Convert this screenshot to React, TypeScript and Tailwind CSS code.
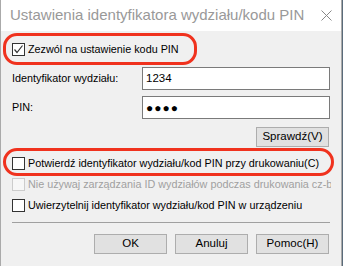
import React from "react";

const font = { fontFamily: '"Segoe UI", "Liberation Sans", Arial, sans-serif' };

const Box = ({ checked = false, disabled = false }: { checked?: boolean; disabled?: boolean }) => (
  <span
    className={
      "flex h-[13px] w-[13px] flex-none items-center justify-center border " +
      (disabled ? "border-[#cccccc] bg-[#f7f7f7]" : "border-[#333333] bg-white")
    }
  >
    {checked && (
      <svg width="11" height="11" viewBox="0 0 11 11">
        <path d="M1.5 5.5 L4 8.5 L9.5 1.5" fill="none" stroke="#333" strokeWidth="1.2" />
      </svg>
    )}
  </span>
);

const Btn = ({ label }: { label: string }) => (
  <button className="flex h-[20px] w-[73px] items-center justify-center border border-[#adadad] bg-[#e1e1e1] text-[11.5px] text-black">
    {label}
  </button>
);

export default function App() {
  return (
    <div className="relative h-[266px] w-[343px] bg-[#5a6b7a]" style={font}>
      <div className="flex h-[266px] w-[342px] flex-col border-x border-[#aaaaaa] bg-[#f0f0f0]">
        <div className="flex h-[31px] flex-none items-center justify-between bg-white pl-[9px] pr-[9px]">
          <span className="text-[15px] text-[#999999]">Ustawienia identyfikatora wydziału/kodu PIN</span>
          <svg width="11" height="11" viewBox="0 0 11 11">
            <path d="M0.5 0.5 L10.5 10.5 M10.5 0.5 L0.5 10.5" stroke="#888" strokeWidth="1" />
          </svg>
        </div>

        <div className="flex flex-col px-[11px] text-[10.8px] text-black">
          <label className="mt-[12px] flex h-[13px] items-center gap-[3px]">
            <Box checked />
            <span>Zezwól na ustawienie kodu PIN</span>
          </label>

          <div className="mt-[11px] flex items-center">
            <span className="w-[130px]">Identyfikator wydziału:</span>
            <div className="flex h-[23px] w-[188px] items-center border border-[#7a7a7a] bg-white px-[3px] text-[11.5px]">
              1234
            </div>
          </div>
          <div className="mt-[6px] flex items-center">
            <span className="w-[130px]">PIN:</span>
            <div className="flex h-[23px] w-[188px] items-center border border-[#7a7a7a] bg-white px-[3px] text-[12px] tracking-[1px]">
              ●●●●
            </div>
          </div>

          <div className="mt-[8px] flex justify-end pr-[1px]">
            <Btn label="Sprawdź(V)" />
          </div>

          <label className="mt-[10px] flex h-[13px] items-center gap-[3px] whitespace-nowrap">
            <Box />
            <span>Potwierdź identyfikator wydziału/kod PIN przy drukowaniu(C)</span>
          </label>
          <label className="mt-[8px] flex h-[13px] w-[319px] items-center gap-[3px] overflow-hidden whitespace-nowrap text-[#a0a0a0]">
            <Box disabled />
            <span>Nie używaj zarządzania ID wydziałów podczas drukowania cz-b</span>
          </label>
          <label className="mt-[8px] flex h-[13px] items-center gap-[3px] whitespace-nowrap">
            <Box />
            <span>Uwierzytelnij identyfikator wydziału/kod PIN w urządzeniu</span>
          </label>

          <div className="mt-[10px] h-px w-[318px] bg-[#a0a0a0]" />

          <div className="mt-[11px] flex justify-end gap-[8px] pr-[1px]">
            <Btn label="OK" />
            <Btn label="Anuluj" />
            <Btn label="Pomoc(H)" />
          </div>
        </div>
      </div>

      <div className="pointer-events-none absolute left-[3px] top-[33px] h-[32px] w-[194px] rounded-[14px] border-[3px] border-[#f0321e]" />
      <div className="pointer-events-none absolute left-[3px] top-[148px] h-[28px] w-[331px] rounded-[14px] border-[3px] border-[#f0321e]" />
    </div>
  );
}
